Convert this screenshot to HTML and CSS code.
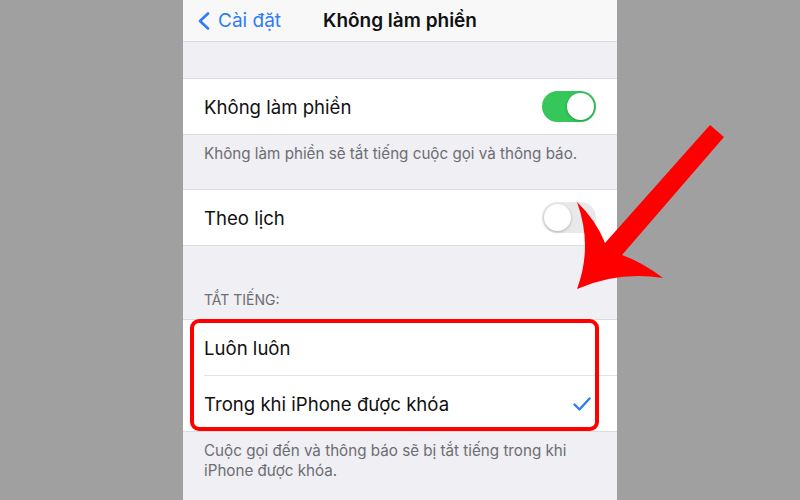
FILE: index.html
```html
<!DOCTYPE html>
<html lang="vi">
<head>
    <meta charset="utf-8">
    <title>Không làm phiền</title>
    <link rel="stylesheet" href="styles.css">
</head>
<body>
    <div class="phone">
        <!-- thanh điều hướng -->
        <div class="navbar">
            <a class="back">
                <svg width="13" height="18" viewBox="0 0 13 18"><path d="M11 1.5 L3 9 L11 16.5" fill="none" stroke="#2f7cf6" stroke-width="2.6" stroke-linecap="round" stroke-linejoin="round"/></svg>
                <span>Cài đặt</span>
            </a>
            <div class="title">Không làm phiền</div>
            <div></div>
        </div>

        <div class="gap"></div>
        <div class="group">
            <div class="row">
                <span>Không làm phiền</span>
                <span class="toggle on"></span>
            </div>
        </div>
        <div class="footer short">Không làm phiền sẽ tắt tiếng cuộc gọi và thông báo.</div>

        <div class="group">
            <div class="row">
                <span>Theo lịch</span>
                <span class="toggle"></span>
            </div>
        </div>

        <div class="header">TẮT TIẾNG:</div>
        <div class="group marked">
            <div class="row inset">
                <span>Luôn luôn</span>
            </div>
            <div class="row">
                <span>Trong khi iPhone được khóa</span>
                <svg class="check" width="18" height="14" viewBox="0 0 18 14"><path d="M1.5 7.5 L6.5 12.5 L16.5 1.5" fill="none" stroke="#2f7cf6" stroke-width="2.4" stroke-linecap="round" stroke-linejoin="round"/></svg>
            </div>
            <div class="redbox"></div>
        </div>
        <div class="footer">Cuộc gọi đến và thông báo sẽ bị tắt tiếng trong khi iPhone được khóa.</div>
    </div>

    <!-- mũi tên chỉ vào mục đang chọn -->
    <svg class="arrow" width="800" height="500" viewBox="0 0 800 500">
        <path d="M710 125 L724 137 L622 255 Q642 262 663 278 Q618 271 577 289 Q593 246 577 202 Q596 220 605 243 Z" fill="#ff0000"/>
    </svg>
</body>
</html>
```

FILE: styles.css
```css
body {
    margin: 0;
    background: #a0a0a0;
    font-family: Inter, "Noto Sans", sans-serif;
    color: #111;
}

.phone {
    width: 434px;
    height: 500px;
    margin: 0 auto;
    background: #efeff4;
    overflow: hidden;
}

.navbar {
    height: 42px;
    background: #f8f8f8;
    border-bottom: 1px solid #d9d9dd;
    display: grid;
    grid-template-columns: 1fr auto 1fr;
    align-items: center;
    box-sizing: border-box;
}

.back {
    display: flex;
    align-items: center;
    gap: 8px;
    padding-left: 14px;
    color: #2f7cf6;
    font-size: 19px;
}

.title {
    font-size: 19px;
    font-weight: 600;
}

.gap {
    height: 36px;
}

.group {
    background: #fff;
    border-top: 1px solid #dcdce0;
    border-bottom: 1px solid #dcdce0;
}

.group.marked {
    position: relative;
}

.row {
    height: 55px;
    margin-left: 21px;
    padding-right: 21px;
    display: flex;
    align-items: center;
    justify-content: space-between;
    font-size: 18.6px;
}

.row.inset {
    border-bottom: 1px solid #e2e2e6;
}

.toggle {
    width: 54px;
    height: 31px;
    border-radius: 16px;
    background: #e9e9eb;
    position: relative;
}

.toggle::after {
    content: "";
    position: absolute;
    top: 2px;
    left: 2px;
    width: 27px;
    height: 27px;
    border-radius: 50%;
    background: #fff;
    box-shadow: 0 1px 3px rgba(0, 0, 0, 0.25);
}

.toggle.on {
    background: #35c759;
}

.toggle.on::after {
    left: 25px;
}

.check {
    margin-right: 5px;
}

.footer {
    padding: 9px 21px 0;
    font-size: 15.2px;
    line-height: 20px;
    color: #6d6d72;
}

.footer.short {
    height: 45px;
}

.header {
    padding: 45px 21px 11px;
    font-size: 14px;
    color: #6d6d72;
}

.redbox {
    position: absolute;
    top: -1px;
    left: 7px;
    width: 409px;
    height: 112px;
    box-sizing: border-box;
    border: 4px solid #ff0000;
    border-radius: 9px;
}

.arrow {
    position: absolute;
    top: 0;
    left: 0;
}
```
